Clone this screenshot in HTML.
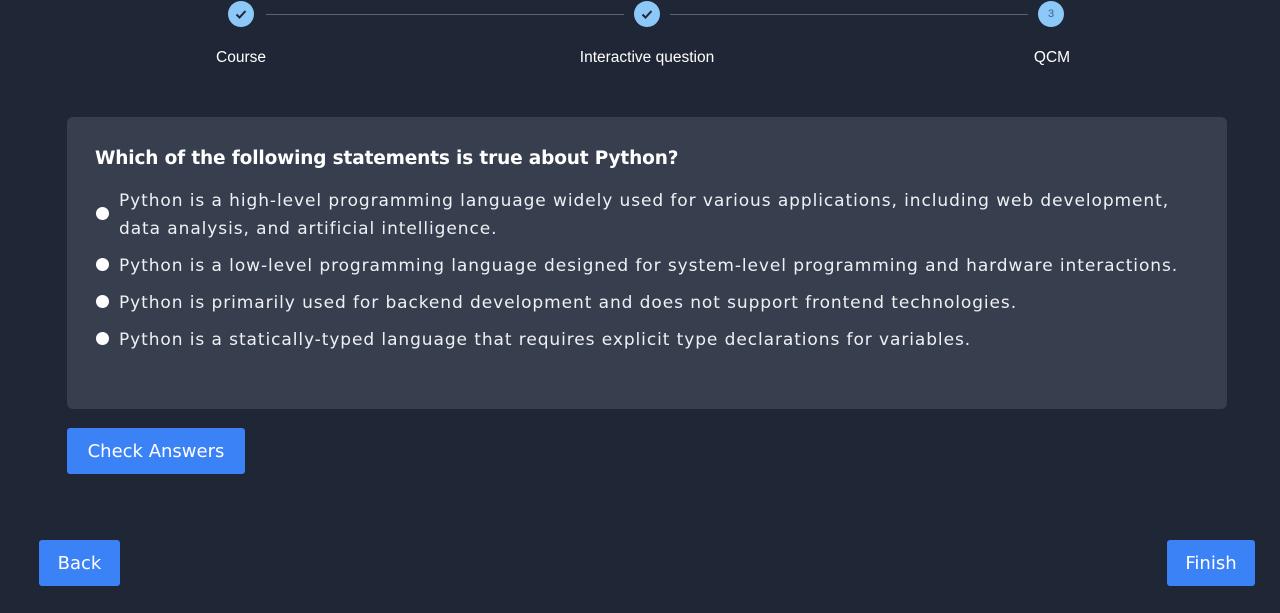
<!DOCTYPE html>
<html><head><meta charset="utf-8"><style>
body{margin:0;width:1280px;height:613px;background:#1f2636;font-family:"Liberation Sans",sans-serif;position:relative;overflow:hidden;color:#fff}
.line{position:absolute;top:14px;height:1px;background:#5b6270}
.dot{position:absolute;top:1px;width:26px;height:26px;border-radius:50%;background:#8cc8f8;display:flex;align-items:center;justify-content:center;font-size:11px;color:#3b5f86}
.lab{position:absolute;top:49px;font-size:15.5px;transform:translateX(-50%);white-space:nowrap}
.card{position:absolute;left:67px;top:117px;width:1160px;height:292px;background:#373f4f;border-radius:6px}
h1{position:absolute;left:95px;top:148px;margin:0;font:bold 18.5px "DejaVu Sans",sans-serif;letter-spacing:-0.15px}
.opt{position:absolute;left:119px;font:17px "DejaVu Sans",sans-serif;letter-spacing:0.92px;line-height:28px;white-space:nowrap;color:#eef0f3}
.r{position:absolute;left:96px;width:13px;height:13px;border-radius:50%;background:#fff}
.btn{position:absolute;background:#3b82f6;border-radius:3px;color:#fff;font:18px "DejaVu Sans",sans-serif;display:flex;align-items:center;justify-content:center}
</style></head><body>
<div class="line" style="left:266px;width:358px"></div>
<div class="line" style="left:670px;width:358px"></div>
<div class="dot" style="left:228px"><svg width="14" height="14" viewBox="0 0 14 14"><path d="M2.5 7.5l3 3 6-6.5" stroke="#1f2636" stroke-width="2" fill="none"/></svg></div>
<div class="dot" style="left:634px"><svg width="14" height="14" viewBox="0 0 14 14"><path d="M2.5 7.5l3 3 6-6.5" stroke="#1f2636" stroke-width="2" fill="none"/></svg></div>
<div class="dot" style="left:1038px">3</div>
<div class="lab" style="left:241px">Course</div>
<div class="lab" style="left:647px">Interactive question</div>
<div class="lab" style="left:1052px">QCM</div>
<div class="card"></div>
<h1>Which of the following statements is true about Python?</h1>
<div class="r" style="top:207px"></div>
<div class="opt" style="top:187px">Python is a high-level programming language widely used for various applications, including web development,<br>data analysis, and artificial intelligence.</div>
<div class="r" style="top:258px"></div>
<div class="opt" style="top:252px">Python is a low-level programming language designed for system-level programming and hardware interactions.</div>
<div class="r" style="top:295px"></div>
<div class="opt" style="top:289px">Python is primarily used for backend development and does not support frontend technologies.</div>
<div class="r" style="top:332px"></div>
<div class="opt" style="top:326px">Python is a statically-typed language that requires explicit type declarations for variables.</div>
<div class="btn" style="left:67px;top:428px;width:178px;height:46px">Check Answers</div>
<div class="btn" style="left:39px;top:540px;width:81px;height:46px">Back</div>
<div class="btn" style="left:1167px;top:540px;width:88px;height:46px">Finish</div>
</body></html>
